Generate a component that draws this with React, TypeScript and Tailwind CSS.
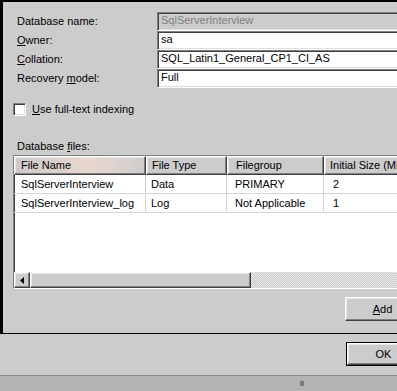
import React from "react";

const sunken =
  "border-t border-l border-t-[#808080] border-l-[#808080] border-b border-r border-b-white border-r-white shadow-[inset_1px_1px_0_#404040,inset_-1px_-1px_0_#dfdfdf]";
const raised =
  "border-t border-l border-t-white border-l-white border-b border-r border-b-[#404040] border-r-[#404040] shadow-[inset_-1px_-1px_0_#808080,inset_1px_1px_0_#e8e8e8]";

function Field({ label, value, disabled }: { label: React.ReactNode; value: string; disabled?: boolean }) {
  return (
    <>
      <div className="h-[19px] leading-[19px] pl-[4px]">{label}</div>
      <div className={`h-[19px] w-[270px] ${sunken} ${disabled ? "bg-[#cccccc] text-[#808080]" : "bg-white text-black"} leading-[15px] pl-[3px]`}>
        {value}
      </div>
    </>
  );
}

const U = ({ c }: { c: string }) => <span className="underline underline-offset-1">{c}</span>;

export default function App() {
  const cols = [
    { name: "File Name", w: "w-[132px]", hp: "pl-[6px]", rp: "pl-[7px]" },
    { name: "File Type", w: "w-[81px]", hp: "pl-[5px]", rp: "pl-[5px]" },
    { name: "Filegroup", w: "w-[97px]", hp: "pl-[8px]", rp: "pl-[8px]" },
    { name: "Initial Size (MB)", w: "w-[110px]", hp: "pl-[5px]", rp: "pl-[9px]" },
  ];
  const rows = [
    ["SqlServerInterview", "Data", "PRIMARY", "2"],
    ["SqlServerInterview_log", "Log", "Not Applicable", "1"],
  ];
  return (
    <div
      className="w-[397px] h-[391px] overflow-hidden bg-[#cccccc] text-black text-[11px] flex flex-col"
      style={{ fontFamily: '"Liberation Sans", Arial, sans-serif' }}
    >
      {/* main area */}
      <div className="h-[334px] shrink-0 border-t-2 border-l-[3px] border-b border-black pl-[10px] pt-[10px] flex flex-col overflow-hidden">
        <div className="grid grid-cols-[144px_1fr]">
          <Field label="Database name:" value="SqlServerInterview" disabled />
          <Field label={<><U c="O" />wner:</>} value="sa" />
          <Field label={<><U c="C" />ollation:</>} value="SQL_Latin1_General_CP1_CI_AS" />
          <Field label={<>Recovery <U c="m" />odel:</>} value="Full" />
        </div>

        <div className="mt-[15px] flex items-center h-[13px]">
          <div className={`w-[13px] h-[13px] bg-white ${sunken}`} />
          <span className="ml-[6px] leading-[13px]">
            <U c="U" />se full-text indexing
          </span>
        </div>

        <div className="mt-[24px] pl-[4px] h-[13px] leading-[13px]">
          Database <U c="f" />iles:
        </div>

        <div className={`mt-[2px] h-[134px] w-[400px] shrink-0 bg-white flex flex-col ${sunken}`}>
          <div className="h-[19px] flex shrink-0">
            {cols.map((c, i) => (
              <div
                key={c.name}
                className={`${c.w} shrink-0 h-full leading-[17px] whitespace-nowrap overflow-hidden ${c.hp} ${raised} ${
                  i === 0
                    ? "bg-[linear-gradient(90deg,#cfcaca_0%,#d9cfcb_25%,#e8d7cf_55%,#ddd3cf_75%,#cfcccc_100%)]"
                    : "bg-[#cccccc]"
                }`}
              >
                {c.name}
              </div>
            ))}
          </div>
          {rows.map((r, ri) => (
            <div key={ri} className="h-[19px] flex shrink-0 border-b border-[#d6d6d6]">
              {r.map((v, ci) => (
                <div
                  key={ci}
                  className={`${cols[ci].w} shrink-0 leading-[18px] whitespace-nowrap ${cols[ci].rp} ${
                    ci < 3 ? "border-r border-[#d6d6d6]" : ""
                  }`}
                >
                  {v}
                </div>
              ))}
            </div>
          ))}
          <div className="flex-1" />
          <div className="h-[16px] flex shrink-0">
            <div className={`w-[16px] h-[16px] bg-[#cccccc] ${raised} flex items-center justify-center`}>
              <svg width="4" height="7" viewBox="0 0 4 7">
                <path d="M4 0 L0 3.5 L4 7 Z" fill="#000" />
              </svg>
            </div>
            <div className={`w-[221px] h-[16px] bg-[#cccccc] ${raised}`} />
            <div className="flex-1 h-[16px] bg-[repeating-conic-gradient(#e6e6e6_0_25%,#cccccc_0_50%)] bg-[length:2px_2px]" />
          </div>
        </div>

        <div className="mt-[8px] flex">
          <div className="w-[332px] shrink-0" />
          <div className={`w-[75px] h-[24px] shrink-0 bg-[#cccccc] ${raised} flex items-center justify-center`}>
            <span>
              <U c="A" />dd
            </span>
          </div>
        </div>
      </div>

      {/* button row */}
      <div className="h-[41px] shrink-0 pt-[8px] pl-[346px]">
        <div className="w-[75px] h-[24px] border border-black">
          <div className={`w-full h-full bg-[#cccccc] ${raised} flex items-center justify-center`}>OK</div>
        </div>
      </div>

      {/* bottom strip */}
      <div className="flex-1 border-t border-[#8a8a8a] bg-[#b4b4b4] relative">
        <div className="absolute left-[300px] top-[5px] w-[4px] h-[5px] bg-[#7a7a7a]" />
      </div>
    </div>
  );
}
